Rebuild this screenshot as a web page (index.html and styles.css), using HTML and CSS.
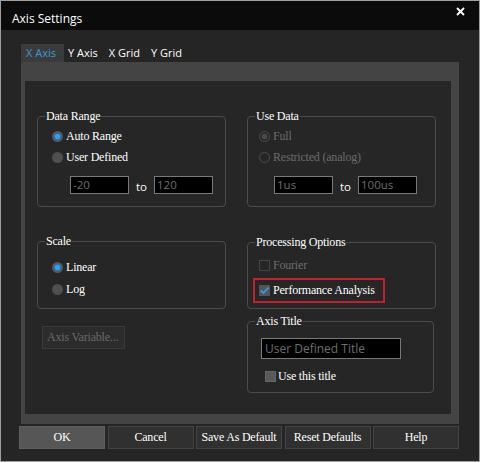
FILE: index.html
```html
<!DOCTYPE html>
<html>
<head>
<meta charset="utf-8">
<link rel="stylesheet" href="styles.css">
</head>
<body>
<div class="window">
  <div class="titlebar">
    <span class="title">Axis Settings</span>
    <svg class="close" width="9" height="9" viewBox="0 0 9 9"><path d="M1 1L8 8M8 1L1 8" stroke="#fff" stroke-width="1.8"/></svg>
  </div>
  <div class="content">
    <div class="tabs">
      <div class="tab active">X Axis</div>
      <div class="tab">Y Axis</div>
      <div class="tab">X Grid</div>
      <div class="tab">Y Grid</div>
    </div>
    <div class="panel">
      <div class="panel-inner">
        <div class="cols">
          <div class="col">
            <div class="group g-data">
              <span class="legend">Data Range</span>
              <div class="row"><span class="radio checked"></span><span class="lbl">Auto Range</span></div>
              <div class="row"><span class="radio"></span><span class="lbl">User Defined</span></div>
              <div class="range r-left">
                <div class="field">-20</div><span class="to">to</span><div class="field">120</div>
              </div>
            </div>
            <div class="group g-scale">
              <span class="legend">Scale</span>
              <div class="row tall"><span class="radio checked"></span><span class="lbl">Linear</span></div>
              <div class="row tall"><span class="radio"></span><span class="lbl">Log</span></div>
            </div>
            <div class="btn-var">Axis Variable...</div>
          </div>
          <div class="col">
            <div class="group g-use">
              <span class="legend">Use Data</span>
              <div class="row"><span class="radio disabled on"></span><span class="lbl dim">Full</span></div>
              <div class="row"><span class="radio disabled"></span><span class="lbl dim">Restricted (analog)</span></div>
              <div class="range r-right">
                <div class="field">1us</div><span class="to">to</span><div class="field">100us</div>
              </div>
            </div>
            <div class="group g-proc">
              <span class="legend">Processing Options</span>
              <div class="row"><span class="check empty"></span><span class="lbl dim">Fourier</span></div>
              <div class="highlight">
                <span class="check on"><svg width="11" height="11" viewBox="0 0 11 11"><path d="M2 5.5L4.5 8L9.5 2.5" stroke="#2f9bff" stroke-width="1.8" fill="none"/></svg></span><span class="lbl">Performance Analysis</span>
              </div>
            </div>
            <div class="group g-title">
              <span class="legend">Axis Title</span>
              <div class="field wide">User Defined Title</div>
              <div class="row use-title"><span class="check filled"></span><span class="lbl">Use this title</span></div>
            </div>
          </div>
        </div>
      </div>
    </div>
    <div class="buttons">
      <div class="btn default">OK</div>
      <div class="btn">Cancel</div>
      <div class="btn">Save As Default</div>
      <div class="btn">Reset Defaults</div>
      <div class="btn">Help</div>
    </div>
  </div>
</div>
</body>
</html>
```
FILE: styles.css
```css
html, body {
  margin: 0;
  padding: 0;
  background: #252525;
}
.window {
  width: 480px;
  height: 462px;
  box-sizing: border-box;
  border: 1px solid #a0a0a0;
  background: #252525;
  font-family: "Liberation Serif", serif;
  font-size: 12px;
  letter-spacing: -0.2px;
  color: #fff;
  overflow: hidden;
}
.titlebar {
  height: 29px;
  background: #0b0b0b;
  display: flex;
  align-items: center;
  justify-content: space-between;
  padding: 0 14px 0 11px;
}
.title {
  font-family: "Open Sans", sans-serif;
  font-size: 12px;
  letter-spacing: 0;
  color: #fff;
  padding-top: 5px;
}
.close {
  margin-top: -8px;
}
.content {
  padding: 14px 20px 0 18px;
}
.tabs {
  display: flex;
  height: 18px;
  margin-left: 2px;
  font-family: "Open Sans", sans-serif;
  font-size: 11px;
  letter-spacing: 0;
}
.tab {
  padding: 0 7px 0 4px;
  line-height: 18px;
  color: #fff;
}
.tab.active {
  background: #3b3b3b;
  color: #3a9ad9;
  padding: 0 8px 0 5px;
}
.panel {
  margin-left: 2px;
  width: 438px;
  height: 362px;
  box-sizing: border-box;
  background: #444;
  padding: 19px 8px 10px 4px;
}
.panel-inner {
  background: #262626;
  height: 100%;
}
.cols {
  display: grid;
  grid-template-columns: 189px 189px;
  column-gap: 21px;
  padding-left: 12px;
}
.col {
  display: flex;
  flex-direction: column;
  align-items: flex-start;
}
.group {
  position: relative;
  box-sizing: border-box;
  width: 189px;
  border: 1px solid #4b4b4b;
  border-radius: 4px;
}
.legend {
  position: absolute;
  top: -8px;
  left: 7px;
  padding: 0 1px;
  line-height: 14px;
  background: #262626;
  color: #fff;
}
.row {
  display: flex;
  align-items: center;
  height: 21px;
}
.row.tall {
  height: 22px;
}
.lbl {
  white-space: nowrap;
  color: #fff;
}
.lbl.dim {
  color: #6c6c6c;
}
.radio {
  width: 11px;
  height: 11px;
  border-radius: 50%;
  background: #4f4f4f;
  margin-right: 3px;
  flex: none;
  box-sizing: border-box;
}
.radio.checked {
  background: radial-gradient(circle, #2aa0ff 0 2.2px, #2677bd 3px, #585858 4px);
}
.radio.disabled {
  background: transparent;
  border: 1px solid #4e4e4e;
}
.radio.disabled.on {
  background: radial-gradient(circle, #4a4a4a 0 2.6px, transparent 3.2px);
}
.g-data {
  margin-top: 35px;
  height: 91px;
  padding: 9px 0 0 14px;
}
.g-use {
  margin-top: 35px;
  height: 91px;
  padding: 9px 0 0 11px;
}
.range {
  display: flex;
  align-items: center;
  margin-top: 8px;
}
.r-left {
  margin-left: 18px;
}
.r-right {
  margin-left: 15px;
}
.field {
  box-sizing: border-box;
  width: 59px;
  height: 18px;
  background: #000;
  border: 1px solid #7a7a7a;
  color: #6e6e6e;
  font-family: "Open Sans", sans-serif;
  font-size: 11.5px;
  letter-spacing: 0;
  line-height: 16px;
  padding-left: 2px;
  white-space: nowrap;
}
.to {
  width: 25px;
  text-align: center;
  color: #fff;
  font-family: "Open Sans", sans-serif;
  font-size: 11.5px;
  letter-spacing: 0;
  padding-top: 2px;
}
.g-scale {
  margin-top: 34px;
  height: 68px;
  padding: 14px 0 0 14px;
}
.btn-var {
  margin-top: 17px;
  margin-left: 5px;
  box-sizing: border-box;
  width: 83px;
  height: 23px;
  background: #2c2c2c;
  border: 1px solid #3a3a3a;
  color: #6a6a6a;
  line-height: 21px;
  padding-left: 4px;
  white-space: nowrap;
}
.g-proc {
  margin-top: 35px;
  height: 67px;
  padding: 12px 0 0 11px;
}
.check {
  width: 11px;
  height: 11px;
  box-sizing: border-box;
  margin-right: 3px;
  flex: none;
  display: block;
}
.check.empty {
  border: 1px solid #444;
}
.check.on {
  background: #555;
}
.check.on svg {
  display: block;
}
.check.filled {
  background: #595959;
  border: 1px solid #666;
  margin-right: 2px;
}
.highlight {
  display: flex;
  align-items: center;
  box-sizing: border-box;
  width: 132px;
  height: 25px;
  margin-top: 2px;
  margin-left: -6px;
  padding-left: 4px;
  border: 2px solid #c4202b;
}
.g-title {
  margin-top: 12px;
  width: 187px;
  height: 72px;
  padding: 16px 0 0 13px;
}
.field.wide {
  width: 140px;
  height: 21px;
  line-height: 19px;
  font-size: 12px;
  padding-left: 3px;
}
.use-title {
  margin-top: 7px;
  margin-left: 4px;
}
.buttons {
  display: grid;
  grid-template-columns: repeat(5, 86px);
  column-gap: 2.5px;
  margin-top: 2px;
}
.btn {
  box-sizing: border-box;
  height: 23px;
  background: #303030;
  border: 1px solid #434343;
  color: #fff;
  text-align: center;
  line-height: 21px;
  white-space: nowrap;
}
.btn.default {
  background: #565656;
  border-color: #5f5f5f;
}
```
